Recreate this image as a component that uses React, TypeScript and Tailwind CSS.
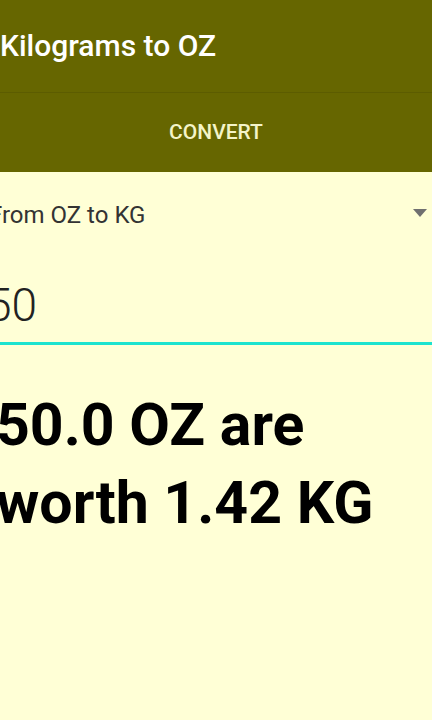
export default function App() {
  return (
    <div
      className="w-[432px] h-[720px] overflow-hidden bg-[#ffffd6] flex flex-col"
      style={{ fontFamily: "Roboto, 'Liberation Sans', sans-serif" }}
    >
      {/* toolbar */}
      <div className="h-[93px] shrink-0 bg-[#666600] flex items-center border-b border-[#5c5c00]">
        <h1 className="text-[30px] font-medium text-white leading-none">Kilograms to OZ</h1>
      </div>

      {/* tab strip */}
      <div className="h-[79px] shrink-0 bg-[#666600] flex items-center justify-center">
        <span className="text-[21px] font-medium text-[#f4f4c8]">CONVERT</span>
      </div>

      {/* spinner */}
      <div className="h-[70px] mt-[8px] shrink-0 flex items-center justify-between">
        <span className="ml-[-11px] text-[24px] text-[#333333]">From OZ to KG</span>
        <svg width="14" height="8" viewBox="0 0 14 8" className="mr-[5px] mb-[4px]">
          <path d="M0 0 L14 0 L7 8 Z" fill="#707070" />
        </svg>
      </div>

      {/* input */}
      <div className="h-[95px] shrink-0 pt-[18px] flex items-center border-b-[3px] border-[#1de3cf]">
        <span className="ml-[-14px] text-[46px] font-light text-[#222222] leading-none">50</span>
      </div>

      {/* result */}
      <p className="mt-[41px] ml-[-4px] text-[59px] leading-[78px] font-bold text-black">
        50.0 OZ are
        <br />
        worth 1.42 KG
      </p>
    </div>
  )
}
